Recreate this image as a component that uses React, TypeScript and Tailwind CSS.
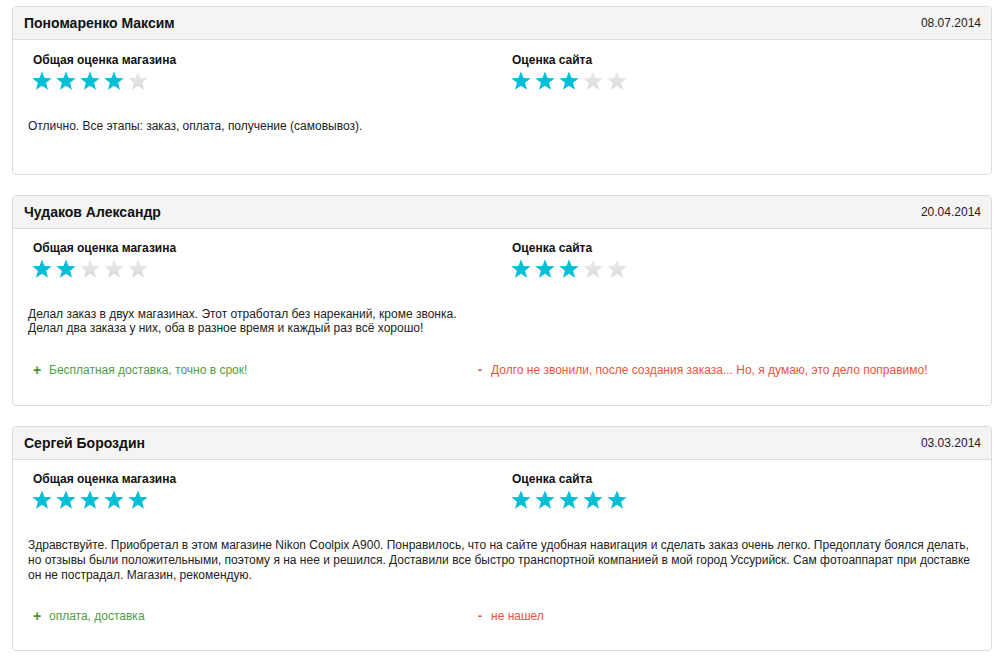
import React from "react";

type Review = {
  name: string;
  date: string;
  shop: number;
  site: number;
  text: string[];
  lh: string;
  pcMt?: string;
  pb: string;
  pros?: string;
  cons?: string;
};

const reviews: Review[] = [
  {
    name: "Пономаренко Максим",
    date: "08.07.2014",
    shop: 4,
    site: 3,
    lh: "leading-[15px]",
    pb: "pt-[13px] pb-[40px]",
    text: ["Отлично. Все этапы: заказ, оплата, получение (самовывоз)."],
  },
  {
    name: "Чудаков Александр",
    date: "20.04.2014",
    shop: 2,
    site: 3,
    lh: "leading-[14px]",
    pcMt: "mt-[28px]",
    pb: "pt-[12px] pb-[28px]",
    text: [
      "Делал заказ в двух магазинах. Этот отработал без нареканий, кроме звонка.",
      "Делал два заказа у них, оба в разное время и каждый раз всё хорошо!",
    ],
    pros: "Бесплатная доставка, точно в срок!",
    cons: "Долго не звонили, после создания заказа... Но, я думаю, это дело поправимо!",
  },
  {
    name: "Сергей Бороздин",
    date: "03.03.2014",
    shop: 5,
    site: 5,
    lh: "leading-[15px]",
    pcMt: "mt-[26px]",
    pb: "pt-[12px] pb-[27px]",
    text: [
      "Здравствуйте. Приобретал в этом магазине Nikon Coolpix A900. Понравилось, что на сайте удобная навигация и сделать заказ очень легко. Предоплату боялся делать, но отзывы были положительными, поэтому я на нее и решился. Доставили все быстро транспортной компанией в мой город Уссурийск. Сам фотоаппарат при доставке он не пострадал. Магазин, рекомендую.",
    ],
    pros: "оплата, доставка",
    cons: "не нашел",
  },
];

function Star({ filled }: { filled: boolean }) {
  return (
    <svg width="20" height="20" viewBox="0 0 20 20" className="shrink-0">
      <defs>
        <linearGradient id="emptyStar" x1="0" y1="0" x2="0" y2="1">
          <stop offset="0" stopColor="#ececec" />
          <stop offset="1" stopColor="#d9d9d9" />
        </linearGradient>
      </defs>
      <polygon
        points="10,0.4 12.6,7 19.7,7.3 14.1,11.8 16,18.8 10,14.8 4,18.8 5.9,11.8 0.3,7.3 7.4,7"
        fill={filled ? "#00bfd6" : "url(#emptyStar)"}
      />
    </svg>
  );
}

function Stars({ value }: { value: number }) {
  return (
    <div className="flex gap-[4px] mt-[4px] ml-[-1px]">
      {[1, 2, 3, 4, 5].map((i) => (
        <Star key={i} filled={i <= value} />
      ))}
    </div>
  );
}

function Card({ r }: { r: Review }) {
  const hasPC = !!(r.pros || r.cons);
  return (
    <div className="border border-[#dcdcdc] rounded-[4px] bg-white overflow-hidden">
      <div className="h-[33px] bg-[#f4f4f4] border-b border-[#dedede] flex items-center justify-between pl-[11px] pr-[10px]">
        <div className="font-bold text-[14px] text-[#111]">{r.name}</div>
        <div className="text-[12px] text-[#222]">{r.date}</div>
      </div>
      <div className={r.pb}>
        <div className="flex px-[10px]">
          <div className="w-[479px] pl-[10px]">
            <div className="font-bold text-[12px] leading-[14px] text-[#111]">Общая оценка магазина</div>
            <Stars value={r.shop} />
          </div>
          <div className="w-[479px] pl-[10px]">
            <div className="font-bold text-[12px] leading-[14px] text-[#111]">Оценка сайта</div>
            <Stars value={r.site} />
          </div>
        </div>
        <div className={`px-[15px] mt-[28px] text-[12px] text-[#222] ${r.lh}`}>
          {r.text.map((t, i) => (
            <div key={i}>{t}</div>
          ))}
        </div>
        {hasPC && (
          <div className={`flex px-[20px] text-[12px] leading-[14px] ${r.pcMt}`}>
            <div className="w-[445px] flex items-center text-[#4f9d46]">
              <span className="font-bold text-[#4a8f2c] text-[14px] w-[16px]">+</span>
              <span>{r.pros}</span>
            </div>
            <div className="flex items-center text-[#e8553d]">
              <span className="font-bold text-[#e04a2e] w-[13px]">-</span>
              <span>{r.cons}</span>
            </div>
          </div>
        )}
      </div>
    </div>
  );
}

export default function App() {
  return (
    <div
      className="w-[1002px] min-h-[658px] bg-white pt-[6px] pl-[12px] pr-[10px] flex flex-col gap-[20px]"
      style={{ fontFamily: '"Liberation Sans", Arial, sans-serif' }}
    >
      {reviews.map((r, i) => (
        <Card key={i} r={r} />
      ))}
    </div>
  );
}
